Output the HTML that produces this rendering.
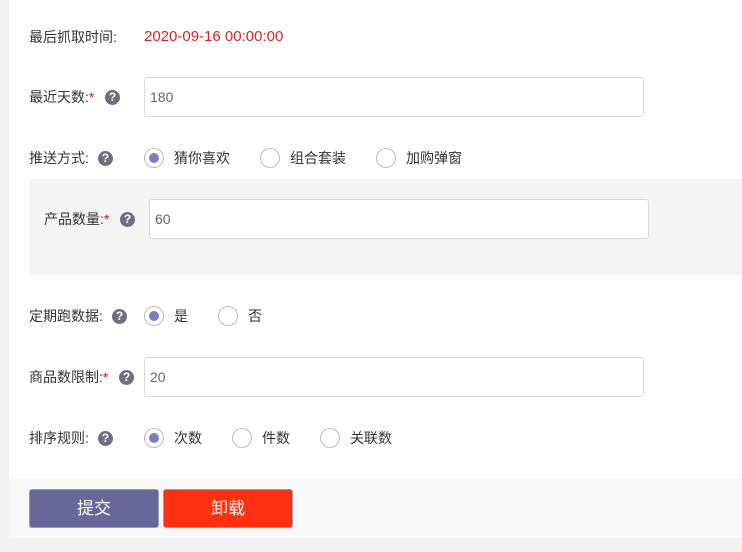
<!DOCTYPE html>
<html><head><meta charset="utf-8"><style>
body{margin:0;width:742px;height:552px;background:#f2f2f2;font-family:"Liberation Sans","Noto Sans CJK SC",sans-serif;font-size:14px;color:#333;position:relative;overflow:hidden}
.panel{position:absolute;left:9px;top:0;width:733px;height:479px;background:#fff}
.foot{position:absolute;left:9px;top:479px;width:733px;height:59px;background:#f8f8f8}
.gbox{position:absolute;left:29px;top:179px;width:713px;height:96px;background:#f4f4f4}
.a{position:absolute;line-height:16px}
.req{color:#e02020}
.q{position:absolute;width:15px;height:15px;border-radius:50%;background:#6f6f7d;color:#fff;font-size:12px;font-weight:bold;text-align:center;line-height:15px}
.in{position:absolute;height:40px;border:1px solid #d9d9d9;border-radius:3px;background:#fff;box-sizing:border-box;width:500px;padding-left:5px;line-height:38px;color:#666}
.r{position:absolute;width:20px;height:20px;border:1px solid #bbb;border-radius:50%;box-sizing:border-box;background:#fff}
.r.on::after{content:"";position:absolute;left:4px;top:4px;width:10px;height:10px;border-radius:50%;background:#7b7bc8}
.btn{position:absolute;top:489px;width:128px;height:37px;border:1px solid #9a9ab8;border-radius:3px;color:#fff;font-size:17px;text-align:center;line-height:37px}
</style></head><body>
<div class="panel"></div><div class="foot"></div><div class="gbox"></div>

<div class="a" style="left:29px;top:29px">最后抓取时间:</div>
<div class="a" style="left:144px;top:29px;color:#d9232d;font-size:15px">2020-09-16 00:00:00</div>

<div class="a" style="left:29px;top:89px">最近天数:<span class="req">*</span></div>
<div class="q" style="left:105px;top:90px">?</div>
<div class="in" style="left:144px;top:77px">180</div>

<div class="a" style="left:29px;top:150px">推送方式:</div>
<div class="q" style="left:98px;top:151px">?</div>
<div class="r on" style="left:144px;top:148px"></div><div class="a" style="left:174px;top:150px">猜你喜欢</div>
<div class="r" style="left:260px;top:148px"></div><div class="a" style="left:290px;top:150px">组合套装</div>
<div class="r" style="left:376px;top:148px"></div><div class="a" style="left:406px;top:150px">加购弹窗</div>

<div class="a" style="left:44px;top:211px">产品数量:<span class="req">*</span></div>
<div class="q" style="left:120px;top:212px">?</div>
<div class="in" style="left:149px;top:199px">60</div>

<div class="a" style="left:29px;top:308px">定期跑数据:</div>
<div class="q" style="left:112px;top:309px">?</div>
<div class="r on" style="left:144px;top:306px"></div><div class="a" style="left:174px;top:308px">是</div>
<div class="r" style="left:218px;top:306px"></div><div class="a" style="left:248px;top:308px">否</div>

<div class="a" style="left:29px;top:369px">商品数限制:<span class="req">*</span></div>
<div class="q" style="left:119px;top:370px">?</div>
<div class="in" style="left:144px;top:357px">20</div>

<div class="a" style="left:29px;top:430px">排序规则:</div>
<div class="q" style="left:98px;top:431px">?</div>
<div class="r on" style="left:144px;top:428px"></div><div class="a" style="left:174px;top:430px">次数</div>
<div class="r" style="left:232px;top:428px"></div><div class="a" style="left:262px;top:430px">件数</div>
<div class="r" style="left:320px;top:428px"></div><div class="a" style="left:350px;top:430px">关联数</div>

<div class="btn" style="left:29px;background:#67679a">提交</div>
<div class="btn" style="left:163px;background:#ff3011">卸载</div>
</body></html>
